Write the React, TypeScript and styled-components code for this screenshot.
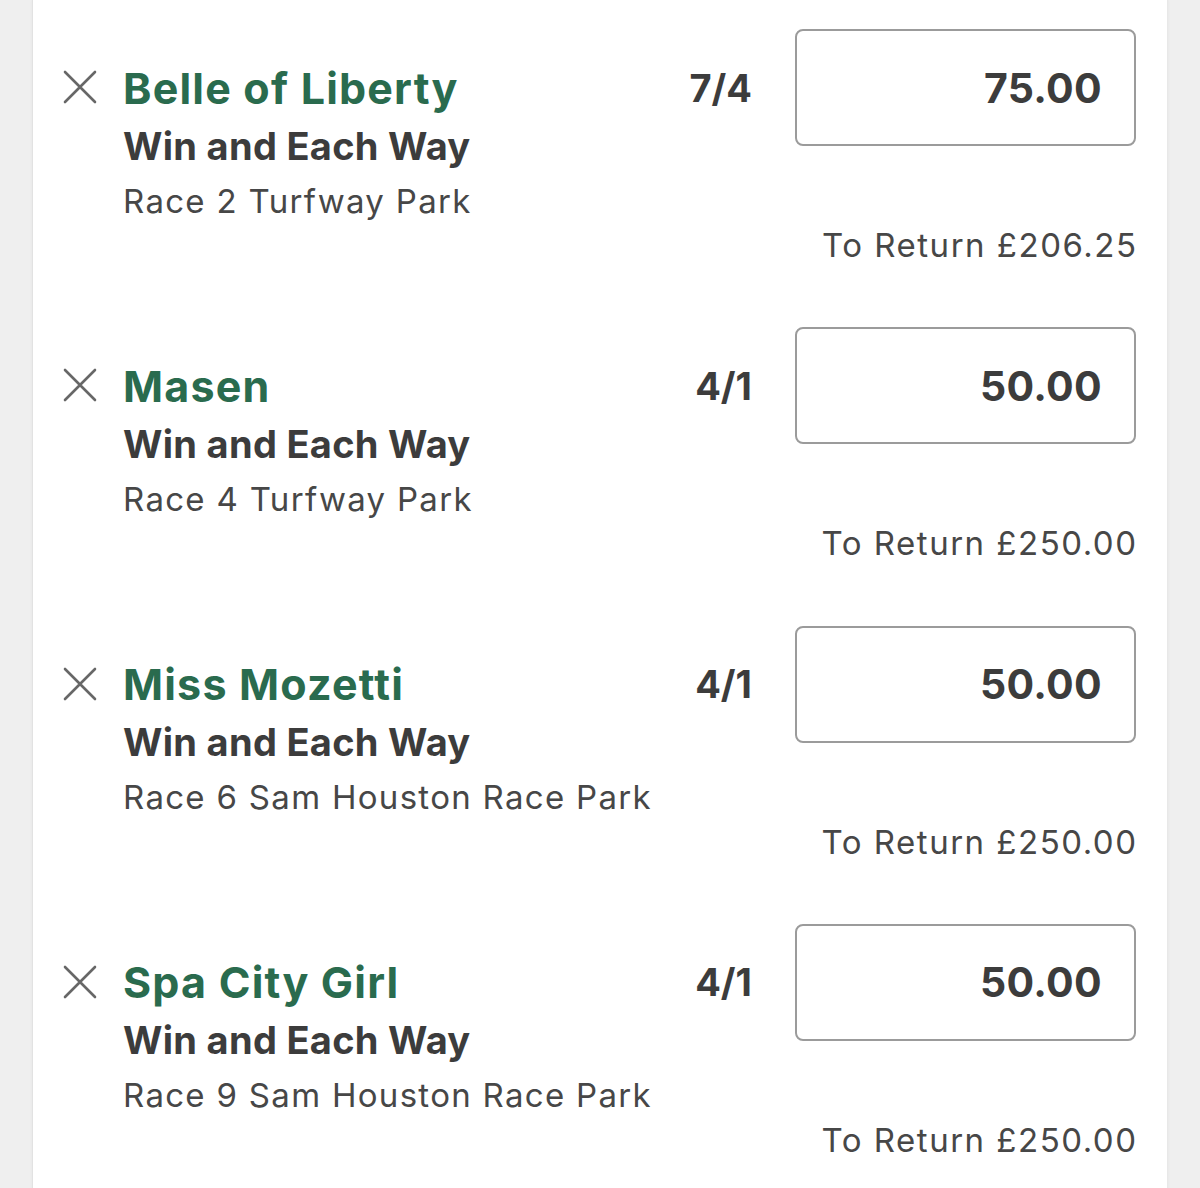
import { FC } from 'react';
import styled, { createGlobalStyle } from 'styled-components';

const GlobalStyle = createGlobalStyle`
  html, body {
    margin: 0;
    padding: 0;
    background: #efefef;
  }
  body {
    font-family: Inter, "Noto Sans", "Liberation Sans", sans-serif;
    -webkit-font-smoothing: antialiased;
  }
`;

type Bet = {
  id: number;
  runner: string;
  market: string;
  event: string;
  odds: string;
  stake: string;
  toReturn: string;
};

const bets: Bet[] = [
  {
    id: 1,
    runner: 'Belle of Liberty',
    market: 'Win and Each Way',
    event: 'Race 2 Turfway Park',
    odds: '7/4',
    stake: '75.00',
    toReturn: '£206.25',
  },
  {
    id: 2,
    runner: 'Masen',
    market: 'Win and Each Way',
    event: 'Race 4 Turfway Park',
    odds: '4/1',
    stake: '50.00',
    toReturn: '£250.00',
  },
  {
    id: 3,
    runner: 'Miss Mozetti',
    market: 'Win and Each Way',
    event: 'Race 6 Sam Houston Race Park',
    odds: '4/1',
    stake: '50.00',
    toReturn: '£250.00',
  },
  {
    id: 4,
    runner: 'Spa City Girl',
    market: 'Win and Each Way',
    event: 'Race 9 Sam Houston Race Park',
    odds: '4/1',
    stake: '50.00',
    toReturn: '£250.00',
  },
];

const Page = styled.div`
  min-height: 100vh;
  padding: 0 32px;
  box-sizing: border-box;
`;

const Slip = styled.section`
  min-height: 100vh;
  background: #ffffff;
  border-left: 1px solid #e2e2e2;
  border-right: 1px solid #e8e8e8;
  box-shadow: 0 0 3px rgba(0, 0, 0, 0.05);
`;

const BetRow = styled.div`
  height: 298.33px;
  box-sizing: border-box;
  padding: 29px 31px 0 30px;
  display: flex;
  align-items: flex-start;
`;

const RemoveButton = styled.button`
  flex: none;
  width: 34px;
  height: 34px;
  margin-top: 41px;
  padding: 0;
  border: none;
  background: none;
  color: #676767;
  cursor: pointer;
  svg {
    display: block;
  }
`;

const Details = styled.div`
  flex: 1;
  margin-left: 26px;
  display: flex;
  flex-direction: column;
  white-space: nowrap;
`;

const Runner = styled.div`
  margin-top: 33.5px;
  font-size: 43px;
  line-height: 50px;
  font-weight: 700;
  letter-spacing: 1.2px;
  color: #2a6b4e;
`;

const Market = styled.div`
  margin-top: 10px;
  font-size: 38px;
  line-height: 46px;
  font-weight: 700;
  letter-spacing: 0.3px;
  color: #3c3c3c;
`;

const Event = styled.div`
  margin-top: 12px;
  font-size: 33px;
  line-height: 40px;
  font-weight: 400;
  letter-spacing: 1.3px;
  color: #474747;
`;

const Wager = styled.div`
  flex: none;
  display: flex;
  flex-direction: column;
  align-items: flex-end;
`;

const StakeLine = styled.div`
  display: flex;
  align-items: center;
  height: 117px;
`;

const Odds = styled.div`
  margin-right: 43px;
  font-size: 38px;
  font-weight: 700;
  color: #3c3c3c;
`;

const StakeBox = styled.div`
  width: 341px;
  height: 117px;
  box-sizing: border-box;
  border: 2.5px solid #9b9b9b;
  border-radius: 8px;
  padding-right: 32px;
  display: flex;
  align-items: center;
  justify-content: flex-end;
  font-size: 41px;
  font-weight: 700;
  letter-spacing: 0.3px;
  color: #3c3c3c;
`;

const Return = styled.div`
  margin-top: 79px;
  margin-right: -1.5px;
  font-size: 33px;
  line-height: 40px;
  font-weight: 400;
  letter-spacing: 1.5px;
  color: #474747;
`;

const CrossIcon: FC = () => (
  <svg width="34" height="34" viewBox="0 0 34 34" fill="none">
    <path
      d="M2 2 L32 32 M32 2 L2 32"
      stroke="currentColor"
      strokeWidth="2.6"
      strokeLinecap="round"
    />
  </svg>
);

const BetItem: FC<{ bet: Bet }> = ({ bet }) => (
  <BetRow>
    <RemoveButton aria-label={`Remove ${bet.runner}`}>
      <CrossIcon />
    </RemoveButton>
    <Details>
      <Runner>{bet.runner}</Runner>
      <Market>{bet.market}</Market>
      <Event>{bet.event}</Event>
    </Details>
    <Wager>
      <StakeLine>
        <Odds>{bet.odds}</Odds>
        <StakeBox>{bet.stake}</StakeBox>
      </StakeLine>
      <Return>To Return {bet.toReturn}</Return>
    </Wager>
  </BetRow>
);

export default function App() {
  return (
    <>
      <GlobalStyle />
      <Page>
        <Slip>
          {bets.map((bet) => (
            <BetItem key={bet.id} bet={bet} />
          ))}
        </Slip>
      </Page>
    </>
  );
}
